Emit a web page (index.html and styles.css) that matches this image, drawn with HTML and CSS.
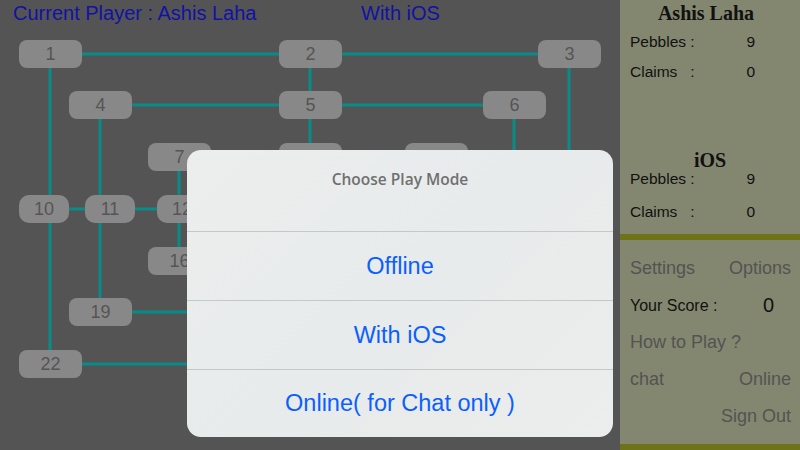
FILE: index.html
```html
<!DOCTYPE html>
<html>
<head>
<meta charset="utf-8">
<link rel="stylesheet" href="styles.css">
</head>
<body>
<div class="screen">
  <main class="board">
    <header class="board-head">
      <span class="current">Current Player : Ashis Laha</span>
      <span class="mode">With iOS</span>
    </header>
    <svg class="lines" width="620" height="450" viewBox="0 0 620 450">
      <g stroke="#078c89" stroke-width="3" fill="none">
        <line x1="50" y1="54" x2="569" y2="54"/>
        <line x1="100" y1="105" x2="514" y2="105"/>
        <line x1="179" y1="157" x2="436" y2="157"/>
        <line x1="179" y1="261" x2="436" y2="261"/>
        <line x1="100" y1="312" x2="514" y2="312"/>
        <line x1="50" y1="364" x2="569" y2="364"/>
        <line x1="43" y1="209" x2="181" y2="209"/>
        <line x1="436" y1="209" x2="569" y2="209"/>
        <line x1="50" y1="54" x2="50" y2="364"/>
        <line x1="100" y1="105" x2="100" y2="312"/>
        <line x1="179" y1="157" x2="179" y2="261"/>
        <line x1="310" y1="54" x2="310" y2="157"/>
        <line x1="310" y1="261" x2="310" y2="364"/>
        <line x1="436" y1="157" x2="436" y2="261"/>
        <line x1="514" y1="105" x2="514" y2="312"/>
        <line x1="569" y1="54" x2="569" y2="364"/>
      </g>
    </svg>
    <div class="node" style="left:19px;top:40px">1</div>
    <div class="node" style="left:279px;top:40px">2</div>
    <div class="node" style="left:538px;top:40px">3</div>
    <div class="node" style="left:69px;top:91px">4</div>
    <div class="node" style="left:279px;top:91px">5</div>
    <div class="node" style="left:483px;top:91px">6</div>
    <div class="node" style="left:148px;top:143px">7</div>
    <div class="node" style="left:279px;top:143px">8</div>
    <div class="node" style="left:405px;top:143px">9</div>
    <div class="node narrow" style="left:19px;top:195px">10</div>
    <div class="node narrow" style="left:85px;top:195px">11</div>
    <div class="node narrow" style="left:157px;top:195px">12</div>
    <div class="node" style="left:148px;top:247px">16</div>
    <div class="node" style="left:69px;top:298px">19</div>
    <div class="node" style="left:19px;top:350px">22</div>
  </main>
  <aside class="side">
    <section class="player first">
      <h2 class="pname">Ashis Laha</h2>
      <div class="stat"><span class="lbl">Pebbles :</span><span class="val">9</span></div>
      <div class="stat"><span class="lbl">Claims&nbsp;&nbsp;&nbsp;:</span><span class="val">0</span></div>
    </section>
    <section class="player second">
      <h2 class="pname">iOS</h2>
      <div class="stat"><span class="lbl">Pebbles :</span><span class="val">9</span></div>
      <div class="stat"><span class="lbl">Claims&nbsp;&nbsp;&nbsp;:</span><span class="val">0</span></div>
    </section>
    <div class="stripe"></div>
    <section class="menu">
      <div class="mrow"><span>Settings</span><span>Options</span></div>
      <div class="mrow"><span class="score-lbl">Your Score :</span><span class="score">0</span></div>
      <div class="mrow"><span>How to Play ?</span></div>
      <div class="mrow"><span>chat</span><span>Online</span></div>
      <div class="mrow"><span></span><span>Sign Out</span></div>
    </section>
    <div class="stripe bottom"></div>
  </aside>
  <div class="dialog">
    <div class="dlg-title">Choose Play Mode</div>
    <div class="dlg-btn">Offline</div>
    <div class="dlg-btn">With iOS</div>
    <div class="dlg-btn">Online( for Chat only )</div>
  </div>
</div>
</body>
</html>
```
FILE: styles.css
```css
* { box-sizing: border-box; margin: 0; padding: 0; }
html, body { width: 800px; height: 450px; overflow: hidden; }
body {
  font-family: "Liberation Sans", Arial, sans-serif;
  background: #545454;
}
.screen {
  position: relative;
  display: flex;
  width: 800px;
  height: 450px;
}
.board {
  position: relative;
  width: 620px;
  height: 450px;
  background: #545454;
}
.board-head {
  position: relative;
  z-index: 2;
  display: flex;
  height: 26px;
  padding-left: 13px;
  align-items: center;
  font-size: 20px;
  color: #1212a4;
}
.board-head .current { width: 348px; }
.lines { position: absolute; left: 0; top: 0; }
.node {
  position: absolute;
  width: 63px;
  height: 28px;
  border-radius: 8px;
  background: #888888;
  color: #555555;
  font-size: 18px;
  display: flex;
  align-items: center;
  justify-content: center;
}
.node.narrow { width: 50px; border-radius: 10px; }
.side {
  width: 180px;
  height: 450px;
  background: #83876f;
  display: flex;
  flex-direction: column;
}
.player { display: flex; flex-direction: column; }
.player.first { height: 145px; }
.player.second { height: 89px; }
.pname {
  font-family: "Liberation Serif", "Times New Roman", serif;
  font-weight: bold;
  font-size: 20px;
  color: #111;
  text-align: center;
}
.first .pname { line-height: 26px; padding-right: 8px; }
.second .pname { line-height: 22px; margin-top: 4px; }
.stat {
  display: flex;
  justify-content: space-between;
  font-size: 15.5px;
  color: #111;
  padding: 0 45px 0 10px;
}
.first .stat { height: 30px; line-height: 30px; }
.first .stat:nth-of-type(1) { margin-top: 1px; }
.second .stat { height: 20px; line-height: 20px; }
.second .stat:nth-of-type(1) { margin-top: -2px; }
.second .stat:nth-of-type(2) { margin-top: 13px; }
.stripe { height: 6px; background: #6e7218; flex: none; }
.stripe.bottom { margin-top: auto; }
.menu {
  display: flex;
  flex-direction: column;
  padding: 10px 9px 0 10px;
  font-size: 18px;
  color: #535353;
}
.mrow {
  display: flex;
  justify-content: space-between;
  align-items: center;
  height: 37px;
}
.score-lbl { font-size: 16px; color: #111; }
.score { font-size: 20px; color: #111; margin-right: 17px; }
.dialog {
  position: absolute;
  left: 187px;
  top: 150px;
  width: 426px;
  height: 287px;
  border-radius: 14px;
  background: linear-gradient(135deg, #eceeee, #e8ebeb 50%, #eceded);
  display: flex;
  flex-direction: column;
  overflow: hidden;
}
.dlg-title {
  height: 82px;
  padding-top: 18px;
  text-align: center;
  font-size: 15.5px;
  color: #707070;
  font-family: "Open Sans", "Liberation Sans", sans-serif;
  font-weight: 600;
  border-bottom: 1px solid #c4c8c8;
  flex: none;
}
.dlg-btn {
  height: 69px;
  flex: none;
  display: flex;
  align-items: center;
  justify-content: center;
  font-size: 23.5px;
  color: #0b5fff;
  border-bottom: 1px solid #c4c8c8;
}
.dlg-btn:last-child { border-bottom: none; flex: 1; }
```
